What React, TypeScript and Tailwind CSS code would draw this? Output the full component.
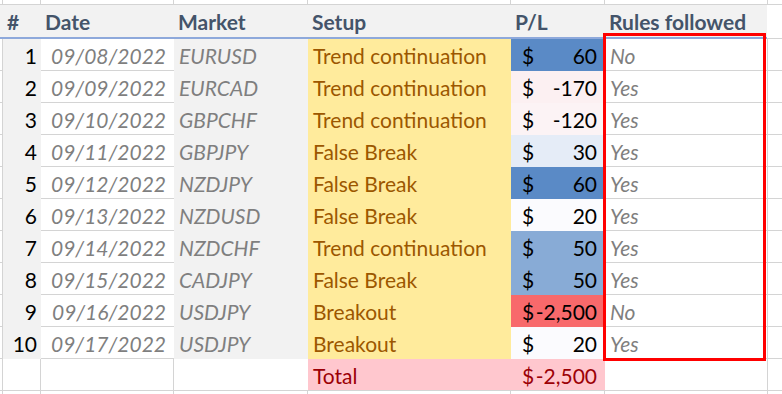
import type { ReactNode } from "react";

type Trade = {
  id: number;
  date: string;
  market: string;
  setup: string;
  pl: string;
  plColor: string;
  rules: "Yes" | "No";
};

const trades: Trade[] = [
  { id: 1, date: "09/08/2022", market: "EURUSD", setup: "Trend continuation", pl: "60", plColor: "bg-[#5a8ac6]", rules: "No" },
  { id: 2, date: "09/09/2022", market: "EURCAD", setup: "Trend continuation", pl: "-170", plColor: "bg-[#fcf0f2]", rules: "Yes" },
  { id: 3, date: "09/10/2022", market: "GBPCHF", setup: "Trend continuation", pl: "-120", plColor: "bg-[#fcf3f5]", rules: "Yes" },
  { id: 4, date: "09/11/2022", market: "GBPJPY", setup: "False Break", pl: "30", plColor: "bg-[#e5ecf7]", rules: "Yes" },
  { id: 5, date: "09/12/2022", market: "NZDJPY", setup: "False Break", pl: "60", plColor: "bg-[#5a8ac6]", rules: "Yes" },
  { id: 6, date: "09/13/2022", market: "NZDUSD", setup: "False Break", pl: "20", plColor: "bg-[#fbfbfe]", rules: "Yes" },
  { id: 7, date: "09/14/2022", market: "NZDCHF", setup: "Trend continuation", pl: "50", plColor: "bg-[#88abd6]", rules: "Yes" },
  { id: 8, date: "09/15/2022", market: "CADJPY", setup: "False Break", pl: "50", plColor: "bg-[#88abd6]", rules: "Yes" },
  { id: 9, date: "09/16/2022", market: "USDJPY", setup: "Breakout", pl: "-2,500", plColor: "bg-[#f8696b]", rules: "No" },
  { id: 10, date: "09/17/2022", market: "USDJPY", setup: "Breakout", pl: "20", plColor: "bg-[#fbfbfe]", rules: "Yes" },
];

// widths include the right gridline of each column
const widths = ["w-[3px]", "w-[38px]", "w-[133px]", "w-[134px]", "w-[203px]", "w-[94px]", "w-[163px]"];

function GridStrip({ height, bottom }: { height: string; bottom?: boolean }) {
  return (
    <div className={`flex ${height}`}>
      {widths.map((w) => (
        <div key={w} className={`${w} shrink-0 border-r border-[#d4d4d4] ${bottom ? "border-b" : ""}`} />
      ))}
      <div className={`flex-1 border-[#d4d4d4] ${bottom ? "border-b" : ""}`} />
    </div>
  );
}

function Head({ w, children }: { w: string; children?: ReactNode }) {
  return <div className={`${w} shrink-0 flex items-end pl-[4px] pb-[3px] leading-6`}>{children}</div>;
}

function Money({ value, className }: { value: string; className: string }) {
  return (
    <div className={`w-[94px] shrink-0 flex items-end justify-between pl-[11px] pr-[8px] pb-[2px] leading-6 border-b ${className}`}>
      <span>$</span>
      <span>{value}</span>
    </div>
  );
}

export default function App() {
  return (
    <div className="relative w-[782px] h-[394px] overflow-hidden bg-white font-[Lato,sans-serif] text-[21px] text-black">
      <GridStrip height="h-[5px]" bottom />

      <div className="flex h-[34px]">
        <div className="w-[767px] shrink-0 flex bg-[#f2f2f2] border-b-2 border-[#8ea9db] font-bold text-[#44546a]">
          <div className="w-[3px] shrink-0" />
          <Head w="w-[38px]">#</Head>
          <Head w="w-[133px]">Date</Head>
          <Head w="w-[134px]">Market</Head>
          <Head w="w-[203px]">Setup</Head>
          <Head w="w-[94px]">P/L</Head>
          <Head w="w-[165px]">Rules followed</Head>
        </div>
        <div className="flex-1 border-b border-[#d4d4d4]" />
      </div>

      {trades.map((t) => (
        <div key={t.id} className="flex h-8">
          <div className="w-[3px] shrink-0 border-r border-b border-[#d4d4d4]" />
          <div className="w-[38px] shrink-0 flex items-end justify-end pr-[4px] pb-[2px] leading-6 bg-[#f2f2f2] border-b border-[#f2f2f2]">
            {t.id}
          </div>
          <div className="w-[133px] shrink-0 flex items-end justify-end pr-[8px] pb-[2px] leading-6 border-b border-[#d4d4d4] italic text-[#7f7f7f]">
            {t.date}
          </div>
          <div className="w-[134px] shrink-0 flex items-end pl-[5px] pb-[2px] leading-6 bg-[#f2f2f2] border-b border-[#f2f2f2] italic text-[#7f7f7f]">
            {t.market}
          </div>
          <div className="w-[203px] shrink-0 flex items-end pl-[5px] pb-[2px] leading-6 bg-[#ffeb9c] border-b border-[#ffeb9c] text-[#9c5700]">
            {t.setup}
          </div>
          <Money value={t.pl} className={`${t.plColor} border-transparent`} />
          <div className="w-[163px] shrink-0 flex items-end pl-[5px] pb-[2px] leading-6 border-r border-b border-[#d4d4d4] italic text-[#7f7f7f]">
            {t.rules}
          </div>
          <div className="flex-1 border-b border-[#d4d4d4]" />
        </div>
      ))}

      <div className="flex h-8">
        <div className="w-[3px] shrink-0 border-r border-b border-[#d4d4d4]" />
        <div className="w-[38px] shrink-0 border-r border-b border-[#d4d4d4]" />
        <div className="w-[133px] shrink-0 border-r border-b border-[#d4d4d4]" />
        <div className="w-[134px] shrink-0 border-b border-[#d4d4d4]" />
        <div className="w-[203px] shrink-0 flex items-end pl-[5px] pb-[2px] leading-6 bg-[#ffc7ce] border-b border-[#d4d4d4] text-[#9c0006]">
          Total
        </div>
        <Money value="-2,500" className="bg-[#ffc7ce] border-[#d4d4d4] text-[#9c0006]" />
        <div className="w-[163px] shrink-0 border-r border-b border-[#d4d4d4]" />
        <div className="flex-1 border-b border-[#d4d4d4]" />
      </div>

      <GridStrip height="h-[4px]" />

      <div className="pointer-events-none absolute left-[603px] top-[33px] w-[163px] h-[328px] border-[3px] border-[#ff0000]" />
    </div>
  );
}
